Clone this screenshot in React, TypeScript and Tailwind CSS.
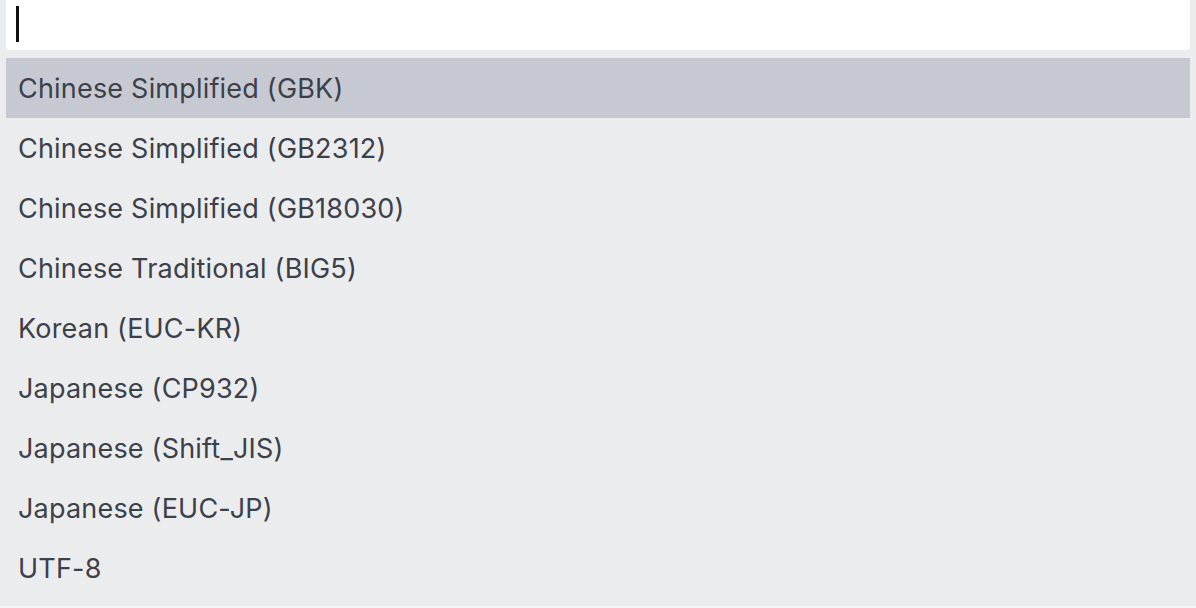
import React from "react";

const encodings = [
  "Chinese Simplified (GBK)",
  "Chinese Simplified (GB2312)",
  "Chinese Simplified (GB18030)",
  "Chinese Traditional (BIG5)",
  "Korean (EUC-KR)",
  "Japanese (CP932)",
  "Japanese (Shift_JIS)",
  "Japanese (EUC-JP)",
  "UTF-8",
];

const App = () => {
  return (
    <div className="w-full h-[608px] bg-[#f5f6f7] overflow-hidden font-['Inter',sans-serif]">
      <div className="h-[606px] bg-[#ebecee] px-[6px]">
        <div className="h-[50px] bg-white rounded-b-[4px] flex items-start pl-[10px] pt-[6px]">
          <div className="w-[3px] h-[36px] bg-[#111111]"></div>
        </div>
        <ul className="mt-[8px]">
          {encodings.map((name, index) => (
            <li
              key={index}
              className={`h-[60px] flex items-center pl-[12px] pt-[2px] text-[27px] tracking-[0.2px] text-[#3c4049] ${
                index === 0 ? "bg-[#c6c9d1]" : ""
              }`}
            >
              {name}
            </li>
          ))}
        </ul>
      </div>
    </div>
  );
};

export default App;
